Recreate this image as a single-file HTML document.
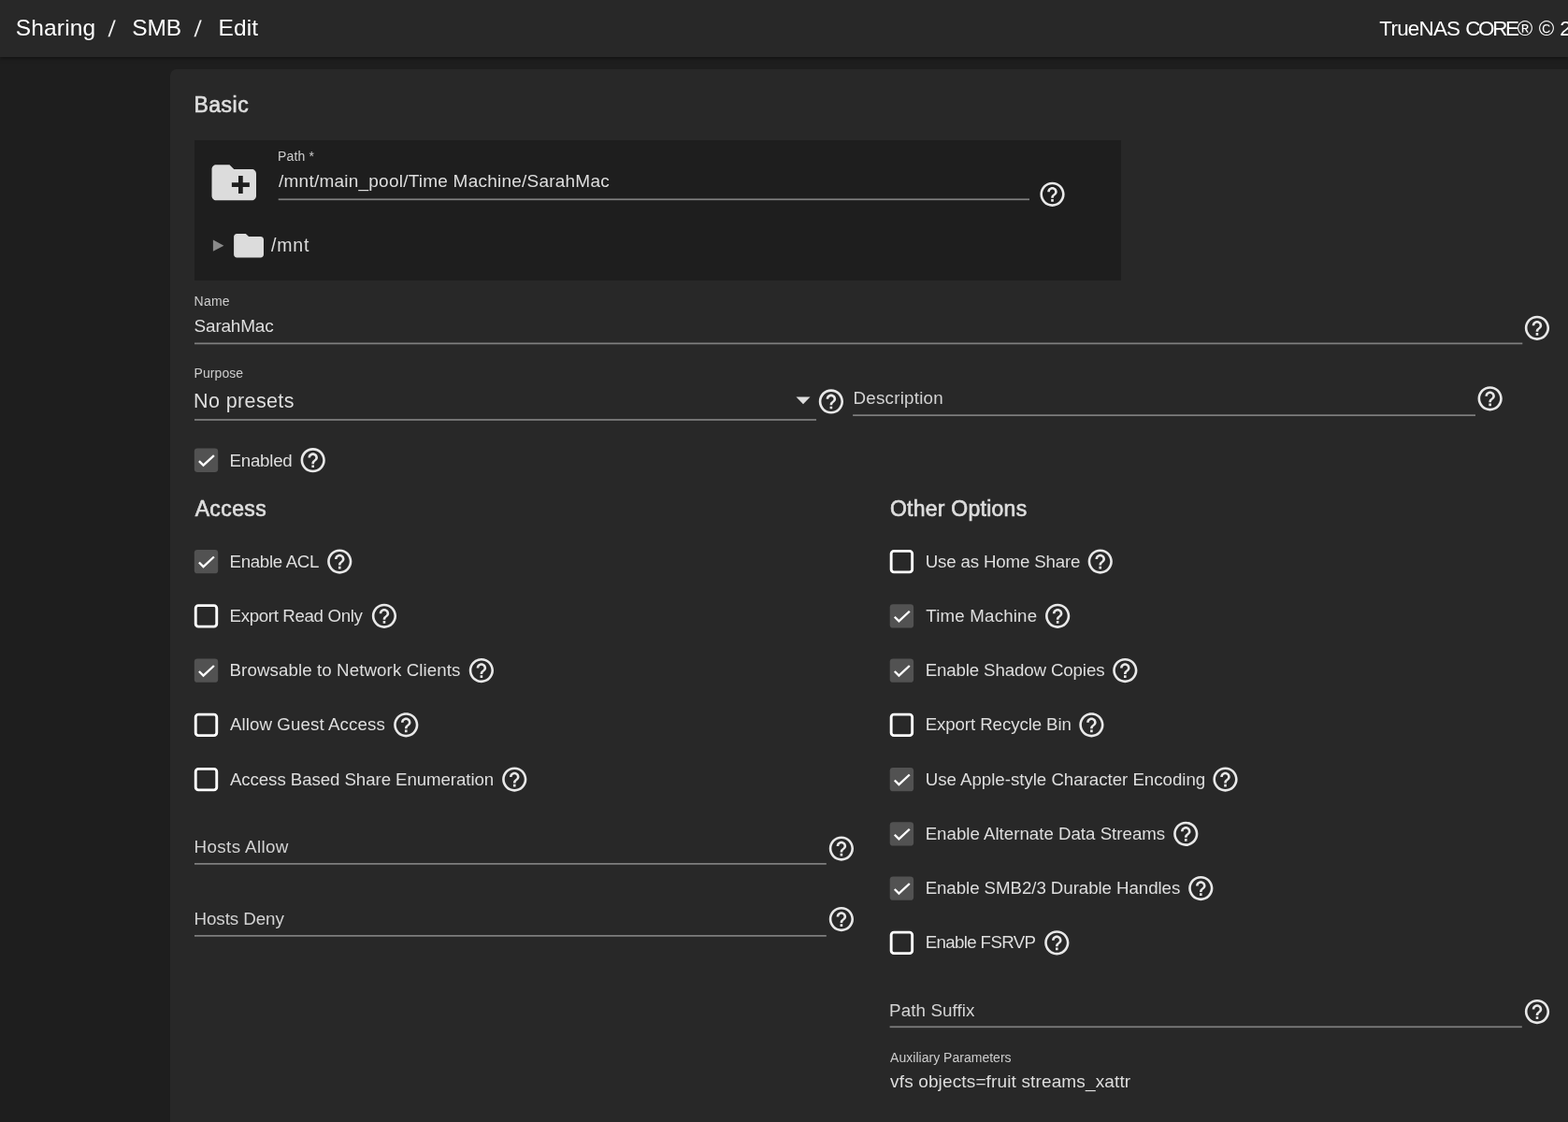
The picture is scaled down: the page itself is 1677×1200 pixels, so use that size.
<!DOCTYPE html>
<html lang="en"><head><meta charset="utf-8"><title>Sharing / SMB / Edit - TrueNAS</title>
<style>
*{box-sizing:border-box}
html,body{margin:0;padding:0}
body{width:1677px;height:1200px;overflow:hidden;position:relative;background:#1e1e1e;font-family:"Liberation Sans", sans-serif;color:#dedede}
.app{position:absolute;left:0;top:0;width:1677px;height:1200px;overflow:hidden;will-change:transform}
.topbar{position:absolute;left:0;top:0;width:1677px;height:61.4px;background:#282828;box-shadow:0 1px 4px rgba(0,0,0,.55)}
.card{position:absolute;left:182.2px;top:74px;width:1520px;height:1140px;background:#282828;border-radius:7px}
.explorer{position:absolute;left:207.9px;top:149.5px;width:991.1px;height:150.8px;background:#1e1e1e}
.form{position:absolute;left:0;top:0;width:0;height:0}
.gfx{position:absolute;left:0;top:0;width:1677px;height:1200px}
.help{fill:#e8e8e8}
.t{position:absolute;margin:0;padding:0;white-space:nowrap;font-weight:400}
.sl{transform:skewX(-5deg);transform-origin:50% 60%}
.med{-webkit-text-stroke:.65px currentColor}
</style></head><body><div class="app">
<header class="topbar"><nav aria-label="breadcrumb"><span class="t" style="left:16.70px;top:14px;font-size:24.5px;line-height:32px;color:#ffffff;letter-spacing:0.185px">Sharing</span><span class="t sl" style="left:115.50px;top:15px;font-size:24px;line-height:32px;color:#f0f0f0">/</span><span class="t" style="left:141.30px;top:14px;font-size:24.5px;line-height:32px;color:#ffffff;letter-spacing:-0.182px">SMB</span><span class="t sl" style="left:207.90px;top:15px;font-size:24px;line-height:32px;color:#f0f0f0">/</span><span class="t" style="left:233.59px;top:14px;font-size:24.5px;line-height:32px;color:#ffffff;letter-spacing:0.097px">Edit</span></nav>
<div class="copyright"><span class="t" style="left:1475.36px;top:16px;font-size:22.4px;line-height:30px;color:#ffffff;letter-spacing:-0.760px">TrueNAS</span> <span class="t" style="left:1567.25px;top:16px;font-size:22.4px;line-height:30px;color:#ffffff;letter-spacing:-2.325px">CORE®</span> <span class="t" style="left:1645.75px;top:16px;font-size:22.4px;line-height:30px;color:#ffffff">©</span> <span class="t" style="left:1668.30px;top:16px;font-size:22.4px;line-height:30px;color:#ffffff">2</span></div></header>
<div class="card"></div>
<div class="explorer"></div>
<svg class="gfx" viewBox="0 0 1677 1200" aria-hidden="true"><path transform="translate(221.75 166.70) scale(2.3750)" fill="#dcdcdc" d="M20 6h-8l-2-2H4c-1.11 0-1.99.89-1.99 2L2 18c0 1.11.89 2 2 2h16c1.11 0 2-.89 2-2V8c0-1.11-.89-2-2-2zm-1 8h-3v3h-2v-3h-3v-2h3V9h2v3h3v2z"/>
<rect x="297.70" y="212.40" width="803.30" height="1.75" fill="#7e7e7e"/>
<path class="help" transform="translate(1109.75 192.00) scale(1.3125)" d="M11 18h2v-2h-2v2zm1-16C6.48 2 2 6.48 2 12s4.48 10 10 10 10-4.48 10-10S17.52 2 12 2zm0 18c-4.41 0-8-3.59-8-8s3.59-8 8-8 8 3.59 8 8-3.59 8-8 8zm0-14c-2.21 0-4 1.79-4 4h2c0-1.1.9-2 2-2s2 .9 2 2c0 2-3 1.75-3 5h2c0-2.25 3-2.5 3-5 0-2.21-1.79-4-4-4z"/>
<path d="M227.9 256.6L239.4 262.7L227.9 268.8z" fill="#8a8a8a"/>
<path transform="translate(246.90 243.50) scale(1.5958)" fill="#dcdcdc" d="M10 4H4c-1.1 0-1.99.9-1.99 2L2 18c0 1.1.9 2 2 2h16c1.1 0 2-.9 2-2V8c0-1.1-.9-2-2-2h-8l-2-2z"/>
<rect x="208.00" y="366.50" width="1420.30" height="1.75" fill="#7e7e7e"/>
<path class="help" transform="translate(1628.20 335.00) scale(1.3125)" d="M11 18h2v-2h-2v2zm1-16C6.48 2 2 6.48 2 12s4.48 10 10 10 10-4.48 10-10S17.52 2 12 2zm0 18c-4.41 0-8-3.59-8-8s3.59-8 8-8 8 3.59 8 8-3.59 8-8 8zm0-14c-2.21 0-4 1.79-4 4h2c0-1.1.9-2 2-2s2 .9 2 2c0 2-3 1.75-3 5h2c0-2.25 3-2.5 3-5 0-2.21-1.79-4-4-4z"/>
<rect x="208.00" y="448.10" width="665.05" height="1.75" fill="#7e7e7e"/>
<path d="M851.5 424.5h15l-7.5 7.8z" fill="#dedede"/>
<path class="help" transform="translate(873.15 413.65) scale(1.3125)" d="M11 18h2v-2h-2v2zm1-16C6.48 2 2 6.48 2 12s4.48 10 10 10 10-4.48 10-10S17.52 2 12 2zm0 18c-4.41 0-8-3.59-8-8s3.59-8 8-8 8 3.59 8 8-3.59 8-8 8zm0-14c-2.21 0-4 1.79-4 4h2c0-1.1.9-2 2-2s2 .9 2 2c0 2-3 1.75-3 5h2c0-2.25 3-2.5 3-5 0-2.21-1.79-4-4-4z"/>
<rect x="912.10" y="443.30" width="665.90" height="1.75" fill="#7e7e7e"/>
<path class="help" transform="translate(1577.90 410.60) scale(1.3125)" d="M11 18h2v-2h-2v2zm1-16C6.48 2 2 6.48 2 12s4.48 10 10 10 10-4.48 10-10S17.52 2 12 2zm0 18c-4.41 0-8-3.59-8-8s3.59-8 8-8 8 3.59 8 8-3.59 8-8 8zm0-14c-2.21 0-4 1.79-4 4h2c0-1.1.9-2 2-2s2 .9 2 2c0 2-3 1.75-3 5h2c0-2.25 3-2.5 3-5 0-2.21-1.79-4-4-4z"/>
<g transform="translate(207.80 479.50)"><rect width="25.4" height="25.4" rx="3.4" fill="#525252"/><path d="M5.1,13.6 9.7,18.2 21.1,7.6" fill="none" stroke="#fff" stroke-width="2.35"/></g>
<path class="help" transform="translate(318.95 476.45) scale(1.3125)" d="M11 18h2v-2h-2v2zm1-16C6.48 2 2 6.48 2 12s4.48 10 10 10 10-4.48 10-10S17.52 2 12 2zm0 18c-4.41 0-8-3.59-8-8s3.59-8 8-8 8 3.59 8 8-3.59 8-8 8zm0-14c-2.21 0-4 1.79-4 4h2c0-1.1.9-2 2-2s2 .9 2 2c0 2-3 1.75-3 5h2c0-2.25 3-2.5 3-5 0-2.21-1.79-4-4-4z"/>
<g transform="translate(207.80 587.90)"><rect width="25.4" height="25.4" rx="3.4" fill="#525252"/><path d="M5.1,13.6 9.7,18.2 21.1,7.6" fill="none" stroke="#fff" stroke-width="2.35"/></g>
<path class="help" transform="translate(347.50 584.85) scale(1.3125)" d="M11 18h2v-2h-2v2zm1-16C6.48 2 2 6.48 2 12s4.48 10 10 10 10-4.48 10-10S17.52 2 12 2zm0 18c-4.41 0-8-3.59-8-8s3.59-8 8-8 8 3.59 8 8-3.59 8-8 8zm0-14c-2.21 0-4 1.79-4 4h2c0-1.1.9-2 2-2s2 .9 2 2c0 2-3 1.75-3 5h2c0-2.25 3-2.5 3-5 0-2.21-1.79-4-4-4z"/>
<rect x="209.25" y="647.60" width="22.5" height="22.5" rx="2.9" fill="none" stroke="#fff" stroke-width="2.9"/>
<path class="help" transform="translate(395.20 643.10) scale(1.3125)" d="M11 18h2v-2h-2v2zm1-16C6.48 2 2 6.48 2 12s4.48 10 10 10 10-4.48 10-10S17.52 2 12 2zm0 18c-4.41 0-8-3.59-8-8s3.59-8 8-8 8 3.59 8 8-3.59 8-8 8zm0-14c-2.21 0-4 1.79-4 4h2c0-1.1.9-2 2-2s2 .9 2 2c0 2-3 1.75-3 5h2c0-2.25 3-2.5 3-5 0-2.21-1.79-4-4-4z"/>
<g transform="translate(207.80 704.40)"><rect width="25.4" height="25.4" rx="3.4" fill="#525252"/><path d="M5.1,13.6 9.7,18.2 21.1,7.6" fill="none" stroke="#fff" stroke-width="2.35"/></g>
<path class="help" transform="translate(499.15 701.35) scale(1.3125)" d="M11 18h2v-2h-2v2zm1-16C6.48 2 2 6.48 2 12s4.48 10 10 10 10-4.48 10-10S17.52 2 12 2zm0 18c-4.41 0-8-3.59-8-8s3.59-8 8-8 8 3.59 8 8-3.59 8-8 8zm0-14c-2.21 0-4 1.79-4 4h2c0-1.1.9-2 2-2s2 .9 2 2c0 2-3 1.75-3 5h2c0-2.25 3-2.5 3-5 0-2.21-1.79-4-4-4z"/>
<rect x="209.25" y="764.10" width="22.5" height="22.5" rx="2.9" fill="none" stroke="#fff" stroke-width="2.9"/>
<path class="help" transform="translate(418.50 759.60) scale(1.3125)" d="M11 18h2v-2h-2v2zm1-16C6.48 2 2 6.48 2 12s4.48 10 10 10 10-4.48 10-10S17.52 2 12 2zm0 18c-4.41 0-8-3.59-8-8s3.59-8 8-8 8 3.59 8 8-3.59 8-8 8zm0-14c-2.21 0-4 1.79-4 4h2c0-1.1.9-2 2-2s2 .9 2 2c0 2-3 1.75-3 5h2c0-2.25 3-2.5 3-5 0-2.21-1.79-4-4-4z"/>
<rect x="209.25" y="822.35" width="22.5" height="22.5" rx="2.9" fill="none" stroke="#fff" stroke-width="2.9"/>
<path class="help" transform="translate(534.50 817.85) scale(1.3125)" d="M11 18h2v-2h-2v2zm1-16C6.48 2 2 6.48 2 12s4.48 10 10 10 10-4.48 10-10S17.52 2 12 2zm0 18c-4.41 0-8-3.59-8-8s3.59-8 8-8 8 3.59 8 8-3.59 8-8 8zm0-14c-2.21 0-4 1.79-4 4h2c0-1.1.9-2 2-2s2 .9 2 2c0 2-3 1.75-3 5h2c0-2.25 3-2.5 3-5 0-2.21-1.79-4-4-4z"/>
<rect x="208.00" y="923.00" width="675.80" height="1.75" fill="#7e7e7e"/>
<path class="help" transform="translate(884.15 891.85) scale(1.3125)" d="M11 18h2v-2h-2v2zm1-16C6.48 2 2 6.48 2 12s4.48 10 10 10 10-4.48 10-10S17.52 2 12 2zm0 18c-4.41 0-8-3.59-8-8s3.59-8 8-8 8 3.59 8 8-3.59 8-8 8zm0-14c-2.21 0-4 1.79-4 4h2c0-1.1.9-2 2-2s2 .9 2 2c0 2-3 1.75-3 5h2c0-2.25 3-2.5 3-5 0-2.21-1.79-4-4-4z"/>
<rect x="208.00" y="1000.00" width="675.80" height="1.75" fill="#7e7e7e"/>
<path class="help" transform="translate(884.15 967.35) scale(1.3125)" d="M11 18h2v-2h-2v2zm1-16C6.48 2 2 6.48 2 12s4.48 10 10 10 10-4.48 10-10S17.52 2 12 2zm0 18c-4.41 0-8-3.59-8-8s3.59-8 8-8 8 3.59 8 8-3.59 8-8 8zm0-14c-2.21 0-4 1.79-4 4h2c0-1.1.9-2 2-2s2 .9 2 2c0 2-3 1.75-3 5h2c0-2.25 3-2.5 3-5 0-2.21-1.79-4-4-4z"/>
<rect x="953.15" y="589.35" width="22.5" height="22.5" rx="2.9" fill="none" stroke="#fff" stroke-width="2.9"/>
<path class="help" transform="translate(1161.00 584.85) scale(1.3125)" d="M11 18h2v-2h-2v2zm1-16C6.48 2 2 6.48 2 12s4.48 10 10 10 10-4.48 10-10S17.52 2 12 2zm0 18c-4.41 0-8-3.59-8-8s3.59-8 8-8 8 3.59 8 8-3.59 8-8 8zm0-14c-2.21 0-4 1.79-4 4h2c0-1.1.9-2 2-2s2 .9 2 2c0 2-3 1.75-3 5h2c0-2.25 3-2.5 3-5 0-2.21-1.79-4-4-4z"/>
<g transform="translate(951.70 646.15)"><rect width="25.4" height="25.4" rx="3.4" fill="#525252"/><path d="M5.1,13.6 9.7,18.2 21.1,7.6" fill="none" stroke="#fff" stroke-width="2.35"/></g>
<path class="help" transform="translate(1115.40 643.10) scale(1.3125)" d="M11 18h2v-2h-2v2zm1-16C6.48 2 2 6.48 2 12s4.48 10 10 10 10-4.48 10-10S17.52 2 12 2zm0 18c-4.41 0-8-3.59-8-8s3.59-8 8-8 8 3.59 8 8-3.59 8-8 8zm0-14c-2.21 0-4 1.79-4 4h2c0-1.1.9-2 2-2s2 .9 2 2c0 2-3 1.75-3 5h2c0-2.25 3-2.5 3-5 0-2.21-1.79-4-4-4z"/>
<g transform="translate(951.70 704.40)"><rect width="25.4" height="25.4" rx="3.4" fill="#525252"/><path d="M5.1,13.6 9.7,18.2 21.1,7.6" fill="none" stroke="#fff" stroke-width="2.35"/></g>
<path class="help" transform="translate(1187.55 701.35) scale(1.3125)" d="M11 18h2v-2h-2v2zm1-16C6.48 2 2 6.48 2 12s4.48 10 10 10 10-4.48 10-10S17.52 2 12 2zm0 18c-4.41 0-8-3.59-8-8s3.59-8 8-8 8 3.59 8 8-3.59 8-8 8zm0-14c-2.21 0-4 1.79-4 4h2c0-1.1.9-2 2-2s2 .9 2 2c0 2-3 1.75-3 5h2c0-2.25 3-2.5 3-5 0-2.21-1.79-4-4-4z"/>
<rect x="953.15" y="764.10" width="22.5" height="22.5" rx="2.9" fill="none" stroke="#fff" stroke-width="2.9"/>
<path class="help" transform="translate(1151.65 759.60) scale(1.3125)" d="M11 18h2v-2h-2v2zm1-16C6.48 2 2 6.48 2 12s4.48 10 10 10 10-4.48 10-10S17.52 2 12 2zm0 18c-4.41 0-8-3.59-8-8s3.59-8 8-8 8 3.59 8 8-3.59 8-8 8zm0-14c-2.21 0-4 1.79-4 4h2c0-1.1.9-2 2-2s2 .9 2 2c0 2-3 1.75-3 5h2c0-2.25 3-2.5 3-5 0-2.21-1.79-4-4-4z"/>
<g transform="translate(951.70 820.90)"><rect width="25.4" height="25.4" rx="3.4" fill="#525252"/><path d="M5.1,13.6 9.7,18.2 21.1,7.6" fill="none" stroke="#fff" stroke-width="2.35"/></g>
<path class="help" transform="translate(1294.75 817.85) scale(1.3125)" d="M11 18h2v-2h-2v2zm1-16C6.48 2 2 6.48 2 12s4.48 10 10 10 10-4.48 10-10S17.52 2 12 2zm0 18c-4.41 0-8-3.59-8-8s3.59-8 8-8 8 3.59 8 8-3.59 8-8 8zm0-14c-2.21 0-4 1.79-4 4h2c0-1.1.9-2 2-2s2 .9 2 2c0 2-3 1.75-3 5h2c0-2.25 3-2.5 3-5 0-2.21-1.79-4-4-4z"/>
<g transform="translate(951.70 879.15)"><rect width="25.4" height="25.4" rx="3.4" fill="#525252"/><path d="M5.1,13.6 9.7,18.2 21.1,7.6" fill="none" stroke="#fff" stroke-width="2.35"/></g>
<path class="help" transform="translate(1252.50 876.10) scale(1.3125)" d="M11 18h2v-2h-2v2zm1-16C6.48 2 2 6.48 2 12s4.48 10 10 10 10-4.48 10-10S17.52 2 12 2zm0 18c-4.41 0-8-3.59-8-8s3.59-8 8-8 8 3.59 8 8-3.59 8-8 8zm0-14c-2.21 0-4 1.79-4 4h2c0-1.1.9-2 2-2s2 .9 2 2c0 2-3 1.75-3 5h2c0-2.25 3-2.5 3-5 0-2.21-1.79-4-4-4z"/>
<g transform="translate(951.70 937.40)"><rect width="25.4" height="25.4" rx="3.4" fill="#525252"/><path d="M5.1,13.6 9.7,18.2 21.1,7.6" fill="none" stroke="#fff" stroke-width="2.35"/></g>
<path class="help" transform="translate(1268.55 934.35) scale(1.3125)" d="M11 18h2v-2h-2v2zm1-16C6.48 2 2 6.48 2 12s4.48 10 10 10 10-4.48 10-10S17.52 2 12 2zm0 18c-4.41 0-8-3.59-8-8s3.59-8 8-8 8 3.59 8 8-3.59 8-8 8zm0-14c-2.21 0-4 1.79-4 4h2c0-1.1.9-2 2-2s2 .9 2 2c0 2-3 1.75-3 5h2c0-2.25 3-2.5 3-5 0-2.21-1.79-4-4-4z"/>
<rect x="953.15" y="997.10" width="22.5" height="22.5" rx="2.9" fill="none" stroke="#fff" stroke-width="2.9"/>
<path class="help" transform="translate(1114.55 992.60) scale(1.3125)" d="M11 18h2v-2h-2v2zm1-16C6.48 2 2 6.48 2 12s4.48 10 10 10 10-4.48 10-10S17.52 2 12 2zm0 18c-4.41 0-8-3.59-8-8s3.59-8 8-8 8 3.59 8 8-3.59 8-8 8zm0-14c-2.21 0-4 1.79-4 4h2c0-1.1.9-2 2-2s2 .9 2 2c0 2-3 1.75-3 5h2c0-2.25 3-2.5 3-5 0-2.21-1.79-4-4-4z"/>
<rect x="951.60" y="1097.40" width="676.20" height="1.75" fill="#7e7e7e"/>
<path class="help" transform="translate(1628.25 1066.35) scale(1.3125)" d="M11 18h2v-2h-2v2zm1-16C6.48 2 2 6.48 2 12s4.48 10 10 10 10-4.48 10-10S17.52 2 12 2zm0 18c-4.41 0-8-3.59-8-8s3.59-8 8-8 8 3.59 8 8-3.59 8-8 8zm0-14c-2.21 0-4 1.79-4 4h2c0-1.1.9-2 2-2s2 .9 2 2c0 2-3 1.75-3 5h2c0-2.25 3-2.5 3-5 0-2.21-1.79-4-4-4z"/></svg>
<main class="form"><section>
<h4 class="t med" style="left:207.48px;top:97px;font-size:23px;line-height:30px;color:#dedede;letter-spacing:0.482px">Basic</h4>
<label class="t" style="left:297.07px;top:158px;font-size:14px;line-height:19px;color:#cdcdcd;letter-spacing:0.171px">Path *</label>
<div class="t" style="left:298.07px;top:181px;font-size:19px;line-height:25px;color:#dedede;letter-spacing:0.227px">/mnt/main_pool/Time Machine/SarahMac</div>
<div class="t" style="left:290.10px;top:249px;font-size:19.5px;line-height:26px;color:#dedede;letter-spacing:0.796px">/mnt</div>
<label class="t" style="left:207.57px;top:313px;font-size:14px;line-height:19px;color:#cdcdcd;letter-spacing:0.250px">Name</label>
<div class="t" style="left:207.56px;top:336px;font-size:19px;line-height:25px;color:#dedede;letter-spacing:-0.202px">SarahMac</div>
<label class="t" style="left:207.57px;top:390px;font-size:14px;line-height:19px;color:#cdcdcd;letter-spacing:0.064px">Purpose</label>
<div class="t" style="left:207.10px;top:415px;font-size:21.5px;line-height:28px;color:#dedede;letter-spacing:0.378px">No presets</div>
<label class="t" style="left:912.51px;top:413px;font-size:18.8px;line-height:25px;color:#d3d3d3;letter-spacing:0.223px">Description</label>
<label class="t" style="left:245.53px;top:480px;font-size:18.7px;line-height:25px;color:#dedede;letter-spacing:-0.233px">Enabled</label>
</section><section>
<h4 class="t med" style="left:208.64px;top:529px;font-size:23px;line-height:30px;color:#dedede;letter-spacing:0.387px">Access</h4>
<label class="t" style="left:245.53px;top:588px;font-size:18.7px;line-height:25px;color:#dedede;letter-spacing:-0.314px">Enable ACL</label>
<label class="t" style="left:245.53px;top:646px;font-size:18.7px;line-height:25px;color:#dedede;letter-spacing:-0.338px">Export Read Only</label>
<label class="t" style="left:245.53px;top:704px;font-size:18.7px;line-height:25px;color:#dedede;letter-spacing:0.106px">Browsable to Network Clients</label>
<label class="t" style="left:245.90px;top:762px;font-size:18.7px;line-height:25px;color:#dedede;letter-spacing:0.105px">Allow Guest Access</label>
<label class="t" style="left:245.90px;top:821px;font-size:18.7px;line-height:25px;color:#dedede;letter-spacing:-0.079px">Access Based Share Enumeration</label>
<label class="t" style="left:207.51px;top:893px;font-size:18.8px;line-height:25px;color:#d3d3d3;letter-spacing:0.382px">Hosts Allow</label>
<label class="t" style="left:207.51px;top:970px;font-size:18.8px;line-height:25px;color:#d3d3d3;letter-spacing:-0.083px">Hosts Deny</label>
</section><section>
<h4 class="t med" style="left:951.95px;top:529px;font-size:23px;line-height:30px;color:#dedede;letter-spacing:0.253px">Other Options</h4>
<label class="t" style="left:989.72px;top:588px;font-size:18.7px;line-height:25px;color:#dedede;letter-spacing:-0.164px">Use as Home Share</label>
<label class="t" style="left:990.33px;top:646px;font-size:18.7px;line-height:25px;color:#dedede;letter-spacing:0.190px">Time Machine</label>
<label class="t" style="left:989.63px;top:704px;font-size:18.7px;line-height:25px;color:#dedede;letter-spacing:-0.126px">Enable Shadow Copies</label>
<label class="t" style="left:989.63px;top:762px;font-size:18.7px;line-height:25px;color:#dedede;letter-spacing:-0.091px">Export Recycle Bin</label>
<label class="t" style="left:989.72px;top:821px;font-size:18.7px;line-height:25px;color:#dedede;letter-spacing:-0.022px">Use Apple-style Character Encoding</label>
<label class="t" style="left:989.63px;top:879px;font-size:18.7px;line-height:25px;color:#dedede;letter-spacing:-0.000px">Enable Alternate Data Streams</label>
<label class="t" style="left:989.63px;top:937px;font-size:18.7px;line-height:25px;color:#dedede;letter-spacing:-0.057px">Enable SMB2/3 Durable Handles</label>
<label class="t" style="left:989.63px;top:995px;font-size:18.7px;line-height:25px;color:#dedede;letter-spacing:-0.627px">Enable FSRVP</label>
<label class="t" style="left:951.11px;top:1068px;font-size:18.8px;line-height:25px;color:#d3d3d3;letter-spacing:0.092px">Path Suffix</label>
<label class="t" style="left:952.10px;top:1122px;font-size:14px;line-height:19px;color:#cdcdcd;letter-spacing:0.018px">Auxiliary Parameters</label>
<div class="t" style="left:952.09px;top:1144px;font-size:19px;line-height:25px;color:#dedede;letter-spacing:0.141px">vfs objects=fruit streams_xattr</div>
</section></main>
</div></body></html>
